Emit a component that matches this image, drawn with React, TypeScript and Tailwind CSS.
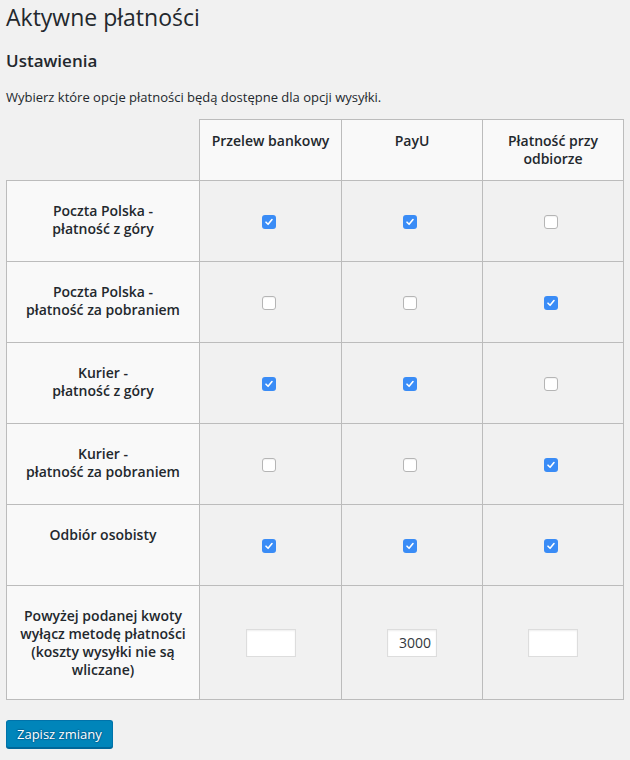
import { useState } from "react";

const methods = ["Przelew bankowy", "PayU", "Płatność przy odbiorze"];

const shippingRows = [
  { label: ["Poczta Polska -", "płatność z góry"], checked: [true, true, false] },
  { label: ["Poczta Polska -", "płatność za pobraniem"], checked: [false, false, true] },
  { label: ["Kurier -", "płatność z góry"], checked: [true, true, false] },
  { label: ["Kurier -", "płatność za pobraniem"], checked: [false, false, true] },
  { label: ["Odbiór osobisty"], checked: [true, true, true] },
];

function Checkbox({ checked, onChange }: { checked: boolean; onChange: () => void }) {
  return (
    <button
      type="button"
      role="checkbox"
      aria-checked={checked}
      onClick={onChange}
      className={
        checked
          ? "inline-flex h-[14px] w-[14px] items-center justify-center rounded-[3px] bg-[#3a8cf6] align-middle"
          : "inline-flex h-[14px] w-[14px] items-center justify-center rounded-[3px] border border-[#b5b5b5] bg-white align-middle shadow-[inset_0_1px_1px_rgba(0,0,0,0.05)]"
      }
    >
      {checked && (
        <svg width="10" height="10" viewBox="0 0 10 10">
          <path d="M2 5.2 L4.1 7.3 L8 2.6" fill="none" stroke="#fff" strokeWidth="1.6" strokeLinecap="round" strokeLinejoin="round" />
        </svg>
      )}
    </button>
  );
}

function App() {
  const [rows, setRows] = useState(shippingRows.map((r) => r.checked));
  const [limits, setLimits] = useState(["", "3000", ""]);

  const toggle = (ri: number, ci: number) => {
    setRows(rows.map((r, i) => (i === ri ? r.map((v, j) => (j === ci ? !v : v)) : r)));
  };

  return (
    <div className="min-h-screen bg-[#f1f1f1] pl-[6px] font-['Open_Sans',sans-serif] text-[#23282d]">
      <h1 className="pt-[2px] text-[23px] leading-[30px] font-normal">Aktywne płatności</h1>
      <h2 className="mt-[18px] text-[17px] leading-[22px] font-semibold">Ustawienia</h2>
      <p className="mt-[15px] text-[13px] leading-[20px]">
        Wybierz które opcje płatności będą dostępne dla opcji wysyłki.
      </p>

      <table className="mt-[12px] w-[617px] table-fixed border-collapse text-[14px] leading-[18px]">
        <colgroup>
          <col className="w-[193px]" />
          <col className="w-[142px]" />
          <col className="w-[141px]" />
          <col className="w-[141px]" />
        </colgroup>
        <thead>
          <tr className="h-[61px]">
            <th className="border-0"></th>
            {methods.map((m) => (
              <th key={m} className="border border-[#bcbcbc] bg-[#f9f9f9] px-[10px] pt-[12px] align-top font-semibold">
                {m}
              </th>
            ))}
          </tr>
        </thead>
        <tbody>
          {shippingRows.map((row, ri) => (
            <tr key={ri} className="h-[81px]">
              <th className="border border-[#bcbcbc] bg-[#f9f9f9] px-[10px] pt-[21px] align-top font-semibold">
                {row.label.map((l) => (
                  <div key={l}>{l}</div>
                ))}
              </th>
              {rows[ri].map((c, ci) => (
                <td key={ci} className="border border-[#bcbcbc] pr-[4px] text-center align-middle">
                  <Checkbox checked={c} onChange={() => toggle(ri, ci)} />
                </td>
              ))}
            </tr>
          ))}
          <tr>
            <th className="border border-[#bcbcbc] bg-[#f9f9f9] px-[10px] pt-[21px] pb-[20px] align-top font-semibold">
              Powyżej podanej kwoty wyłącz metodę płatności (koszty wysyłki nie są wliczane)
            </th>
            {limits.map((v, i) => (
              <td key={i} className="border border-[#bcbcbc] text-center align-middle">
                <input
                  type="text"
                  value={v}
                  onChange={(e) => setLimits(limits.map((x, j) => (j === i ? e.target.value : x)))}
                  className="h-[28px] w-[50px] border border-[#dddddd] bg-white pr-[5px] text-right text-[14px] text-[#32373c] shadow-[inset_0_1px_2px_rgba(0,0,0,0.07)] outline-none"
                />
              </td>
            ))}
          </tr>
        </tbody>
      </table>

      <button
        type="button"
        className="mt-[20px] h-[28px] rounded-[3px] border border-[#0073aa] border-b-[#006799] bg-[#0085ba] px-[10px] pb-[1px] text-[13px] leading-[26px] text-white shadow-[0_1px_0_#006799] [text-shadow:0_-1px_1px_#006799,1px_0_1px_#006799,0_1px_1px_#006799,-1px_0_1px_#006799]"
      >
        Zapisz zmiany
      </button>
    </div>
  );
}

export default App;
